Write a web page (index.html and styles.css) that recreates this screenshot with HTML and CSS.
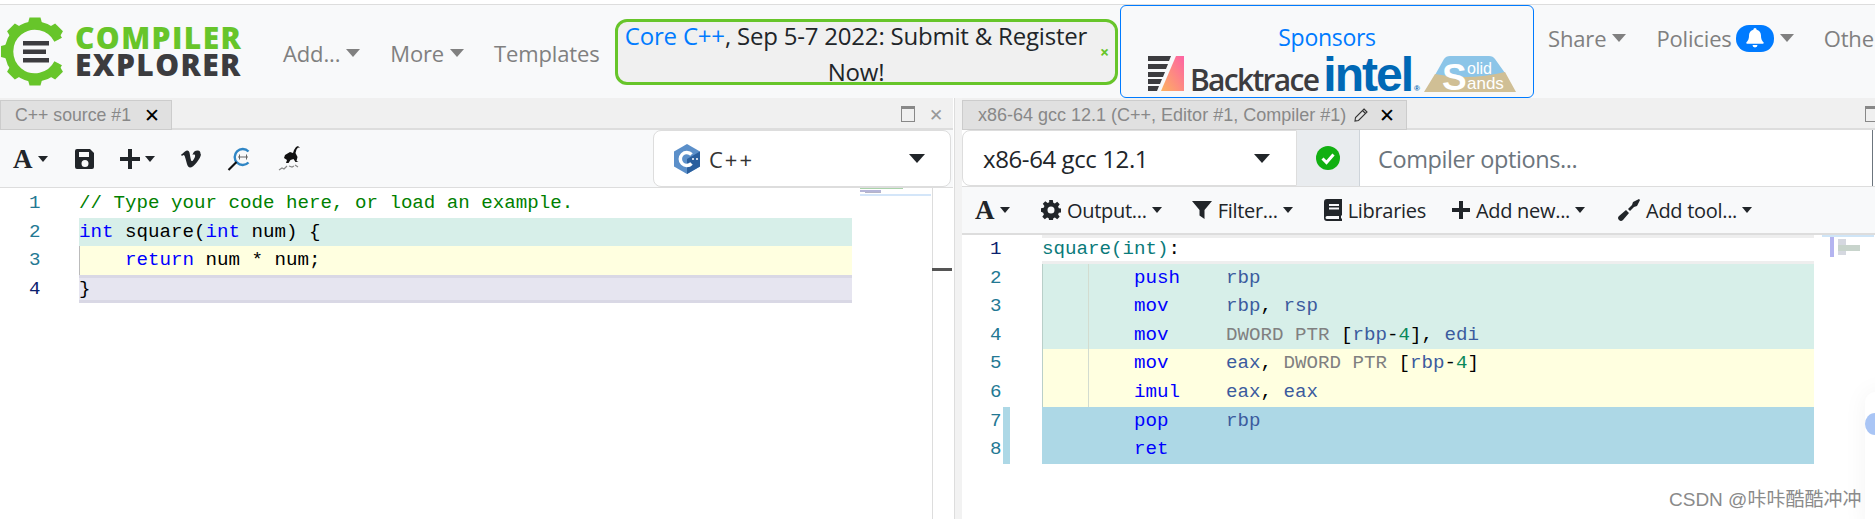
FILE: index.html
```html
<!DOCTYPE html>
<html lang="en">
<head>
  <meta charset="UTF-8">
  <title>Compiler Explorer</title>
  <link rel="stylesheet" href="styles.css">
</head>
<body>

  <!-- Navbar -->
  <div class="navbar">
    <div class="logo">
      <svg class="gear" width="70" height="72" viewBox="0 15 70 72">
        <path d="M58.2 39.7A26 26 0 1 0 58.2 63.3" fill="none" stroke="#67c52a" stroke-width="8.5"/>
        <g fill="#67c52a">
          <polygon points="27,27 29.5,17.5 40.5,17.5 43,27"/>
          <polygon points="27,27 29.5,17.5 40.5,17.5 43,27" transform="rotate(45 35 51.5)"/>
          <polygon points="27,27 29.5,17.5 40.5,17.5 43,27" transform="rotate(-45 35 51.5)"/>
          <polygon points="27,27 29.5,17.5 40.5,17.5 43,27" transform="rotate(-90 35 51.5)"/>
          <polygon points="27,27 29.5,17.5 40.5,17.5 43,27" transform="rotate(-135 35 51.5)"/>
          <polygon points="27,27 29.5,17.5 40.5,17.5 43,27" transform="rotate(180 35 51.5)"/>
          <polygon points="27,27 29.5,17.5 40.5,17.5 43,27" transform="rotate(135 35 51.5)"/>
        </g>
        <g fill="#3c3c3f">
          <rect x="23" y="41" width="26" height="4.5"/>
          <rect x="23" y="49.5" width="23" height="4.5"/>
          <rect x="23" y="58" width="26" height="4.5"/>
        </g>
      </svg>
      <div class="logo-text">
        <span class="logo-top">COMPILER</span>
        <span class="logo-bottom">EXPLORER</span>
      </div>
    </div>

    <div class="nav-left">
      <span class="nav-link">Add...<i class="caret"></i></span>
      <span class="nav-link">More<i class="caret"></i></span>
      <span class="nav-link">Templates</span>
    </div>

    <div class="motd">
      <div class="motd-text"><span class="blue">Core C++</span>, Sep 5-7 2022: Submit &amp; Register Now!</div>
      <span class="motd-close">×</span>
    </div>

    <div class="sponsors">
      <div class="sponsors-title">Sponsors</div>
      <div class="sponsor-logos">
        <svg width="37" height="36" viewBox="0 0 37 36">
          <defs>
            <linearGradient id="bt" x1="0" y1="1" x2="1" y2="0">
              <stop offset="0" stop-color="#fdb25f"/>
              <stop offset="1" stop-color="#fd62a4"/>
            </linearGradient>
          </defs>
          <polygon points="13,35 28,0 36,0 36,35" fill="url(#bt)"/>
          <g fill="#3c3c3f">
            <polygon points="0,0 23,0 21,5 0,5"/>
            <polygon points="0,8 20,8 18,13 0,13"/>
            <polygon points="0,16 17,16 15,21 0,21"/>
            <polygon points="0,23 14,23 12,28 0,28"/>
            <polygon points="0,30 11,30 9,35 0,35"/>
          </g>
        </svg>
        <span class="backtrace">Backtrace</span>
        <span class="intel">intel<sup>®</sup></span>
        <svg class="solid-sands" width="92" height="36" viewBox="0 0 92 36">
          <path d="M20 3Q22 0 26 0H65Q69 0 71 3L81 17Q45 25 11 19Z" fill="#8cc5e8"/>
          <path d="M11 18Q45 25 81 16L92 36H0Z" fill="#d0bf95"/>
          <text class="ss-big" x="18" y="34">S</text>
          <text class="ss-small" x="43" y="18">olid</text>
          <text class="ss-small ss-ands" x="43" y="33">ands</text>
        </svg>
      </div>
    </div>

    <div class="nav-right">
      <span class="nav-link">Share<i class="caret"></i></span>
      <span class="nav-link">Policies<span class="badge">
          <svg width="18" height="20" viewBox="0 0 18 20"><path d="M9 0a1.6 1.6 0 0 0-1.6 1.7C4.700 2.400 3 4.700 3 7.500c0 4.200-1.300 5.300-2.500 6.700-.5.600-.1 1.600.8 1.600h15.400c.9 0 1.300-1 .8-1.600C16.300 12.800 15 11.700 15 7.500c0-2.800-1.700-5.100-4.400-5.800A1.600 1.600 0 0 0 9 0zM6.500 17a2.500 2.500 0 0 0 5 0z" fill="#fff"/></svg>
        </span><i class="caret"></i></span>
      <span class="nav-link">Other</span>
    </div>
  </div>

  <!-- Panes -->
  <div class="panes">

    <!-- Source pane -->
    <div class="pane pane-source">
      <div class="tabstrip">
        <div class="tab tab-source">C++ source #1 <span class="tab-x">✕</span></div>
        <div class="pane-actions">
          <i class="max-icon"></i>
          <span class="pane-x">✕</span>
        </div>
      </div>
      <div class="toolbar toolbar-source">
        <span class="tool-a">A</span><i class="caret dark small"></i>
        <svg class="tool-save" width="20" height="22" viewBox="0 0 20 22"><path d="M2 1h13l4 4v14a2 2 0 0 1-2 2H2a2 2 0 0 1-2-2V3a2 2 0 0 1 2-2zm2 3v5h10V4zm6 8a3.500 3.500 0 1 0 0 7 3.500 3.500 0 0 0 0-7z" fill="#212529" fill-rule="evenodd"/></svg>
        <svg class="tool-plus" width="20" height="20" viewBox="0 0 20 20"><path d="M8 0h4v8h8v4h-8v8H8v-8H0V8h8z" fill="#212529"/></svg><i class="caret dark small"></i>
        <svg class="tool-v" width="20" height="21" viewBox="0 30 448 440"><path d="M447.800 153.600c-2 43.600-32.400 103.300-91.400 179.100-60.900 79.200-112.400 118.800-154.600 118.800-26.100 0-48.200-24.100-66.300-72.300C100.300 250 85.300 174.300 56.200 174.300c-3.400 0-15.100 7.100-35.200 21.100L0 168.200c51.600-45.300 100.900-95.700 131.800-98.500 34.900-3.400 56.300 20.500 64.400 71.500 27.700 175.800 40 202.300 90.300 123 18-28.500 27.800-50.200 29.100-65.100 4.600-43.700-34-40.700-60.200-29.500 21-68.800 61.200-102.200 120.500-100.300 44.100 1.200 64.800 29.800 62.300 85.800z" fill="#212529"/></svg>
        <svg class="tool-zoom" width="24" height="24" viewBox="0 0 24 24"><path d="M21.500 4.500A8 8 0 1 0 21.500 15.500" fill="none" stroke="#2f86c5" stroke-width="2.400"/><path d="M11 10h10M12.500 7.500v5M19.500 7.500v5" stroke="#666" stroke-width="1" fill="none"/><path d="M9.500 15L1.500 23" stroke="#111" stroke-width="2.200"/></svg>
        <svg class="tool-cat" width="24" height="25" viewBox="0 0 24 25"><path d="M7 9l5-3 3 1 1-3 2-3 2-1 2 2-2-.5-1.500 2-1 3.500 2 4-1 4 2 1h-3l-2-3-3 1-2 3H8l1-3-3-2z" fill="#111"/><path d="M1 24l3-2 2 1 3-3M11 20l3 1 2-1M17 19l3 2" stroke="#888" stroke-width="1.200" fill="none"/></svg>
        <div class="lang-select">
          <svg width="28" height="30" viewBox="0 0 28 30"><polygon points="14,0 27,7.500 27,22.500 14,30 1,22.500 1,7.500" fill="#5b8fc9"/><polygon points="14,15 27,7.500 27,22.500 14,30" fill="#2a5f9e"/><path d="M18.500 10.500a6.500 6.500 0 1 0 0 9" fill="none" stroke="#fff" stroke-width="3.500"/><circle cx="20" cy="15" r="1" fill="#fff"/><circle cx="24" cy="15" r="1" fill="#fff"/></svg>
          <span class="lang-name">C++</span>
          <i class="caret dark big"></i>
        </div>
      </div>
      <div class="editor editor-source">
        <div class="line"><span class="ln">1</span><span class="src"><span class="cm">// Type your code here, or load an example.</span></span></div>
        <div class="line"><span class="ln">2</span><span class="src green"><span class="kw">int</span> square(<span class="kw">int</span> num) {</span></div>
        <div class="line"><span class="ln">3</span><span class="src yellow guide-start">    <span class="kw">return</span> num * num;</span></div>
        <div class="line"><span class="ln active">4</span><span class="src current">}</span></div>
        <div class="minimap minimap-source">
          <i class="mini mini-a"></i>
          <i class="mini mini-b"></i>
          <i class="mini mini-c"></i>
          <i class="mini mini-band"></i>
        </div>
        <div class="scroll-line"></div>
        <div class="scroll-mark"></div>
      </div>
    </div>

    <div class="splitter"></div>

    <!-- Compiler pane -->
    <div class="pane pane-compiler">
      <div class="tabstrip">
        <div class="tab tab-compiler">x86-64 gcc 12.1 (C++, Editor #1, Compiler #1)
          <svg class="tab-pencil" width="14" height="14" viewBox="0 0 14 14"><path d="M10 1l3 3-8.500 8.500L1 13l.5-3.500zM8.500 2.500l3 3" fill="none" stroke="#333" stroke-width="1.100"/></svg>
          <span class="tab-x">✕</span>
        </div>
        <div class="pane-actions"><i class="max-icon"></i></div>
      </div>
      <div class="compiler-row">
        <div class="compiler-select">
          <span>x86-64 gcc 12.1</span>
          <i class="caret dark big"></i>
        </div>
        <div class="status-box">
          <svg width="24" height="24" viewBox="0 0 24 24"><circle cx="12" cy="12" r="12" fill="#12b012"/><path d="M6.500 12.500l4 4 7-8" fill="none" stroke="#fff" stroke-width="3"/></svg>
        </div>
        <div class="options-box">Compiler options...</div>
      </div>
      <div class="toolbar toolbar-compiler">
        <span class="tool-a">A</span><i class="caret dark small"></i>
        <span class="tool tool-output">
          <svg width="20" height="20" viewBox="0 0 20 20"><path fill="#212529" fill-rule="evenodd" d="M8.200 0h3.600l.5 2.700 1.600.7 2.300-1.600 2.500 2.500-1.600 2.300.7 1.600 2.700.5v3.600l-2.700.5-.7 1.600 1.600 2.300-2.500 2.500-2.300-1.600-1.600.7-.5 2.700H8.200l-.5-2.700-1.600-.7-2.300 1.600-2.500-2.500 1.600-2.300-.7-1.600L0 11.800V8.200l2.700-.5.7-1.600-1.600-2.300 2.500-2.500 2.300 1.600 1.600-.7zM10 6.500a3.500 3.500 0 1 0 0 7 3.500 3.500 0 0 0 0-7z"/></svg>
          Output...<i class="caret dark small"></i>
        </span>
        <span class="tool tool-filter">
          <svg width="20" height="20" viewBox="0 0 20 20"><path d="M0 1h20l-7.500 9v9l-5-3.500V10z" fill="#212529"/></svg>
          Filter...<i class="caret dark small"></i>
        </span>
        <span class="tool tool-libs">
          <svg width="18" height="22" viewBox="0 0 18 22"><path fill="#212529" fill-rule="evenodd" d="M3 0h15v16l-1 1v2l1 1v2H3a3 3 0 0 1-3-3V3a3 3 0 0 1 3-3zm2 5v2h10V5zm0 3.500v2h10v-2zM3 17a1.500 1.500 0 0 0 0 3h12v-3z"/></svg>
          Libraries
        </span>
        <span class="tool tool-add">
          <svg width="18" height="18" viewBox="0 0 18 18"><path d="M7 0h4v7h7v4h-7v7H7v-7H0V7h7z" fill="#212529"/></svg>
          Add new...<i class="caret dark small"></i>
        </span>
        <span class="tool tool-wrench">
          <svg width="22" height="22" viewBox="0 0 22 22"><path d="M21 0l1 1-3 6-3 1-4 4-2-2 4-4 1-3zM8 11l3 3-6 7a2 2 0 0 1-4-4z" fill="#212529"/></svg>
          Add tool...<i class="caret dark small"></i>
        </span>
      </div>
      <div class="editor editor-compiler">
        <div class="line"><span class="ln active">1</span><span class="src current-light"><span class="lbl">square(int)</span>:</span></div>
        <div class="line"><span class="ln">2</span><span class="src green guides">        <span class="kw">push</span>    <span class="reg">rbp</span></span></div>
        <div class="line"><span class="ln">3</span><span class="src green guides">        <span class="kw">mov</span>     <span class="reg">rbp</span>, <span class="reg">rsp</span></span></div>
        <div class="line"><span class="ln">4</span><span class="src green guides">        <span class="kw">mov</span>     <span class="ptr">DWORD PTR</span> [<span class="reg">rbp</span>-<span class="num">4</span>], <span class="reg">edi</span></span></div>
        <div class="line"><span class="ln">5</span><span class="src yellow guides">        <span class="kw">mov</span>     <span class="reg">eax</span>, <span class="ptr">DWORD PTR</span> [<span class="reg">rbp</span>-<span class="num">4</span>]</span></div>
        <div class="line"><span class="ln">6</span><span class="src yellow guides">        <span class="kw">imul</span>    <span class="reg">eax</span>, <span class="reg">eax</span></span></div>
        <div class="line"><span class="ln marked">7</span><span class="src blue-line">        <span class="kw">pop</span>     <span class="reg">rbp</span></span></div>
        <div class="line"><span class="ln marked">8</span><span class="src blue-line">        <span class="kw">ret</span></span></div>
        <div class="minimap minimap-compiler">
          <i class="mini mini-band2"></i>
          <i class="mini mini-d"></i>
          <i class="mini mini-e"></i>
          <i class="mini mini-f"></i>
          <i class="mini mini-g"></i>
        </div>
      </div>
    </div>
  </div>

  <!-- Overlays -->
  <div class="float-card"><i class="float-arc"></i></div>
  <div class="watermark">CSDN @咔咔酷酷冲冲</div>

</body>
</html>
```

FILE: styles.css
```css
/* Basic styling */
html, body {
  margin: 0;
  padding: 0;
  height: 519px;
  overflow: hidden;
  background-color: #fff;
  font-family: "Open Sans", "Noto Sans", sans-serif;
  color: #212529;
}
i {
  font-style: normal;
}

/* Navbar */
.navbar {
  display: flex;
  align-items: flex-start;
  height: 93px;
  margin-top: 4px;
  border-top: 1px solid #ddd;
  background-color: #f8f9fa;
  white-space: nowrap;
}
.logo {
  display: flex;
  width: 283px;
  flex: none;
  margin-top: 10px;
}
.gear {
  flex: none;
  margin-right: 5px;
}
.logo-text {
  display: flex;
  flex-direction: column;
  margin-top: 9px;
  font-family: "Open Sans", sans-serif;
  font-weight: 800;
  font-size: 30px;
  line-height: 27px;
}
.logo-top {
  color: #67c52a;
  letter-spacing: 1.4px;
}
.logo-bottom {
  color: #3c3c3f;
  letter-spacing: 1.4px;
}
.nav-link {
  display: flex;
  align-items: center;
  font-size: 22px;
  line-height: 30px;
  color: #808080;
  letter-spacing: -0.15px;
}
.caret {
  display: inline-block;
  width: 0;
  height: 0;
  margin-left: 6px;
  border-top: 8px solid #808080;
  border-left: 7px solid transparent;
  border-right: 7px solid transparent;
}
.caret.dark {
  border-top-color: #212529;
}
.caret.small {
  margin-left: 5px;
  border-top-width: 6px;
  border-left-width: 5.500px;
  border-right-width: 5.500px;
}
.caret.big {
  margin-left: auto;
  border-top-width: 9px;
  border-left-width: 8px;
  border-right-width: 8px;
}
.nav-left {
  display: flex;
  width: 332px;
  flex: none;
  gap: 30px;
  margin-top: 33px;
}

/* Message of the day */
.motd {
  position: relative;
  width: 497px;
  height: 60px;
  flex: none;
  margin-top: 14px;
  border: 3px solid #67c52a;
  border-radius: 12px;
  background-color: #f0f0f0;
  font-size: 24px;
  line-height: 36px;
  letter-spacing: -0.2px;
}
.motd-text {
  width: 470px;
  margin: -4px 0 0 3px;
  text-align: center;
  white-space: normal;
}
.blue {
  color: #007bff;
}
.motd-close {
  position: absolute;
  top: 12px;
  right: 6px;
  color: #67c52a;
  font-size: 16px;
  font-weight: 700;
}

/* Sponsors */
.sponsors {
  width: 412px;
  height: 91px;
  flex: none;
  margin-left: 2px;
  border: 1px solid #007bff;
  border-radius: 6px;
}
.sponsors-title {
  margin-top: 16px;
  text-align: center;
  color: #007bff;
  font-size: 23px;
  line-height: 30px;
  letter-spacing: -0.3px;
}
.sponsor-logos {
  display: flex;
  align-items: flex-end;
  height: 36px;
  margin-top: 4px;
  padding-left: 27px;
}
.backtrace {
  margin: 0 0 -6px 5px;
  color: #3c3c3f;
  font-size: 30px;
  font-weight: 600;
  line-height: 36px;
  letter-spacing: -1.7px;
}
.intel {
  display: flex;
  margin: 0 0 -2px 5px;
  color: #0068b5;
  font-family: "Liberation Sans", sans-serif;
  font-size: 48px;
  font-weight: 700;
  line-height: 38px;
  letter-spacing: -2px;
}
.intel sup {
  align-self: flex-end;
  margin: 0 0 0 2px;
  font-size: 8px;
  line-height: 10px;
  letter-spacing: 0;
}
.solid-sands {
  margin-left: auto;
  margin-right: 17px;
}
.ss-big {
  fill: #fff;
  font-family: "Liberation Sans", sans-serif;
  font-size: 37px;
  font-weight: 700;
}
.ss-small {
  fill: #fff;
  font-family: "Liberation Sans", sans-serif;
  font-size: 16px;
}
.ss-ands {
  font-size: 17px;
}
.nav-right {
  display: flex;
  flex: none;
  gap: 30px;
  margin: 18px 0 0 14px;
}
.badge {
  display: flex;
  align-items: center;
  justify-content: center;
  width: 38px;
  height: 27px;
  margin-left: 4px;
  border-radius: 13px;
  background-color: #007bff;
}

/* Panes */
.panes {
  display: flex;
  height: 421px;
}
.pane {
  display: flex;
  flex-direction: column;
  min-width: 0;
}
.pane-source {
  width: 953px;
  flex: none;
}
.pane-compiler {
  flex: 1;
}
.splitter {
  width: 8px;
  flex: none;
  margin-left: 1px;
  background-color: #f2f2f2;
  border-left: 1px solid #ddd;
  box-sizing: border-box;
}
.tabstrip {
  display: flex;
  justify-content: space-between;
  height: 32px;
  flex: none;
  box-sizing: border-box;
  padding-top: 2px;
  background-color: #f0f0f0;
  border-bottom: 2px solid #ddd;
}
.tab {
  display: flex;
  align-items: center;
  height: 30px;
  box-sizing: border-box;
  background-color: #e0e0e0;
  border: 1px solid #ccc;
  color: #888;
  font-family: "Liberation Sans", sans-serif;
  font-size: 17.700px;
  white-space: nowrap;
}
.tab-source {
  width: 172px;
  padding-left: 14px;
}
.tab-compiler {
  width: 445px;
  padding-left: 15px;
  font-size: 18px;
}
.tab-pencil {
  margin-left: 8px;
}
.tab-x {
  margin-left: 13px;
  color: #000;
  font-size: 19px;
}
.tab-compiler .tab-x {
  margin-left: 11px;
}
.pane-actions {
  display: flex;
  align-items: center;
  gap: 14px;
  height: 24px;
  padding-right: 10px;
  margin-top: 2px;
}
.pane-compiler .pane-actions {
  padding-right: 0;
  margin-right: -4px;
}
.max-icon {
  display: block;
  width: 12px;
  height: 12px;
  border: 1px solid #888;
  border-top-width: 3px;
  background-color: transparent;
}
.pane-x {
  color: #999;
  font-size: 17px;
}

/* Toolbars */
.toolbar {
  display: flex;
  align-items: center;
  flex: none;
  background-color: #f8f9fa;
  box-sizing: border-box;
}
.toolbar-source {
  height: 58px;
  padding-left: 13px;
  border-bottom: 1px solid #ddd;
}
.toolbar-compiler {
  height: 48px;
  padding-left: 13px;
  border-bottom: 2px solid #ddd;
  font-size: 20px;
  letter-spacing: -0.3px;
}
.tool-a {
  width: 20px;
  font-family: "Liberation Serif", serif;
  font-size: 27px;
  font-weight: 700;
  line-height: 30px;
}
.tool-save {
  margin-left: 27px;
}
.tool-plus {
  margin-left: 25px;
}
.tool-v {
  margin-left: 26px;
}
.tool-zoom {
  margin-left: 26px;
}
.tool-cat {
  margin-left: 27px;
}
.tool {
  display: flex;
  align-items: center;
  white-space: nowrap;
}
.tool svg {
  margin-right: 6px;
}
.tool-output {
  margin-left: 31px;
}
.tool-filter {
  margin-left: 30px;
}
.tool-libs {
  margin-left: 31px;
}
.tool-add {
  margin-left: 26px;
}
.tool-wrench {
  margin-left: 33px;
}
.lang-select {
  display: flex;
  align-items: center;
  width: 298px;
  height: 57px;
  box-sizing: border-box;
  margin-left: auto;
  margin-right: 2px;
  padding: 0 25px 0 19px;
  background-color: #fff;
  border: 1px solid #ddd;
  border-radius: 8px;
}
.lang-name {
  margin-left: 8px;
  font-size: 22px;
  letter-spacing: 2px;
  color: #333;
}

/* Compiler row */
.compiler-row {
  display: flex;
  height: 57px;
  flex: none;
  background-color: #fff;
  border-bottom: 1px solid #ddd;
  box-sizing: border-box;
  font-size: 24px;
  letter-spacing: -0.4px;
}
.compiler-select {
  display: flex;
  align-items: center;
  width: 335px;
  flex: none;
  box-sizing: border-box;
  padding: 0 26px 0 20px;
  border: 1px solid #ddd;
  border-radius: 8px 0 0 8px;
}
.status-box {
  display: flex;
  align-items: center;
  justify-content: center;
  width: 63px;
  flex: none;
  background-color: #e9ecef;
  border-right: 1px solid #ced4da;
  box-sizing: border-box;
}
.options-box {
  width: 513px;
  flex: none;
  box-sizing: border-box;
  padding-left: 18px;
  font-size: 23.500px;
  line-height: 58px;
  color: #6c757d;
  border-right: 1px solid #6c757d;
}

/* Code editors */
.editor {
  position: relative;
  flex: 1;
  background-color: #fff;
  font-family: "Liberation Mono", monospace;
  font-size: 19.170px;
}
.editor-source {
  padding-top: 1px;
}
.line {
  display: flex;
  height: 28.600px;
}
.ln {
  position: relative;
  width: 79px;
  flex: none;
  box-sizing: border-box;
  padding-left: 29px;
  color: #237893;
  line-height: 28.600px;
}
.ln.active {
  color: #0b216f;
}
.editor-compiler .ln {
  width: 80px;
  padding-left: 28px;
}
.ln.marked::after {
  content: "";
  position: absolute;
  top: 0;
  bottom: 0;
  left: 41px;
  width: 7px;
  background-color: #add8e6;
}
.src {
  width: 773px;
  flex: none;
  box-sizing: border-box;
  white-space: pre;
  line-height: 28.600px;
  color: #000;
}
.editor-compiler .src {
  width: 772px;
}
.green {
  background-color: #d7efe9;
}
.yellow {
  background-color: #ffffe0;
}
.blue-line {
  background-color: #add8e6;
}
.guide-start {
  box-shadow: inset 1px 0 0 #bbb;
}
.guides {
  background-image: linear-gradient(#b9cfc9, #b9cfc9), linear-gradient(#d3dcd0, #d3dcd0);
  background-size: 1px 100%, 1px 100%;
  background-position: 0 0, 46px 0;
  background-repeat: no-repeat;
}
.current {
  background-color: #e6e5f0;
  border-top: 3px solid #d9d8e5;
  border-bottom: 3px solid #d9d8e5;
  line-height: 22.600px;
}
.current-light {
  border-top: 3px solid #eee;
  border-bottom: 3px solid #eee;
  line-height: 22.600px;
}
.kw {
  color: #0000ff;
}
.cm {
  color: #008000;
}
.reg {
  color: #3b5b9e;
}
.ptr {
  color: #808080;
}
.num {
  color: #09885a;
}
.lbl {
  color: #0a7a7a;
}

/* Minimaps and scrollbars */
.minimap {
  position: absolute;
  top: 0;
}
.mini {
  position: absolute;
  display: block;
}
.minimap-source {
  left: 860px;
}
.mini-a {
  top: 0;
  width: 43px;
  height: 1px;
  background-color: #a9d3a9;
}
.mini-b {
  top: 2px;
  width: 21px;
  height: 2px;
  background-color: #b5b5d8;
}
.mini-c {
  top: 4px;
  left: 5px;
  width: 16px;
  height: 1px;
  background-color: #b5b5c8;
}
.mini-band {
  top: 6px;
  width: 71px;
  height: 2px;
  background-color: #d4e6f9;
}
.minimap-compiler {
  left: 860px;
}
.mini-band2 {
  top: 0;
  width: 52px;
  height: 2px;
  background-color: #cfe5f7;
}
.mini-d {
  top: 2px;
  left: 8px;
  width: 4px;
  height: 20px;
  background-color: #b4b4f0;
}
.mini-e {
  top: 4px;
  left: 16px;
  width: 8px;
  height: 6px;
  background-color: #d5d8e0;
}
.mini-f {
  top: 10px;
  left: 16px;
  width: 22px;
  height: 6px;
  background-color: #c8d4cc;
}
.mini-g {
  top: 16px;
  left: 16px;
  width: 8px;
  height: 4px;
  background-color: #d5d8e0;
}
.scroll-line {
  position: absolute;
  top: 0;
  bottom: 0;
  left: 932px;
  width: 1px;
  background-color: #ddd;
}
.scroll-mark {
  position: absolute;
  top: 80px;
  left: 932px;
  width: 20px;
  height: 3px;
  background-color: #555;
}

/* Overlays */
.float-card {
  position: absolute;
  top: 392px;
  left: 1865px;
  width: 30px;
  height: 140px;
  border-radius: 10px 0 0 0;
  background-color: #fff;
  box-shadow: 0 0 24px rgba(0, 0, 0, 0.05);
}
.float-arc {
  position: absolute;
  top: 21px;
  left: 0;
  width: 20px;
  height: 22px;
  border-radius: 50%;
  background-color: #a9c5f5;
}
.watermark {
  position: absolute;
  top: 488px;
  left: 1669px;
  color: #8a8a8a;
  font-family: "Liberation Sans", "Noto Sans CJK SC", sans-serif;
  font-size: 19px;
  line-height: 24px;
}
```
